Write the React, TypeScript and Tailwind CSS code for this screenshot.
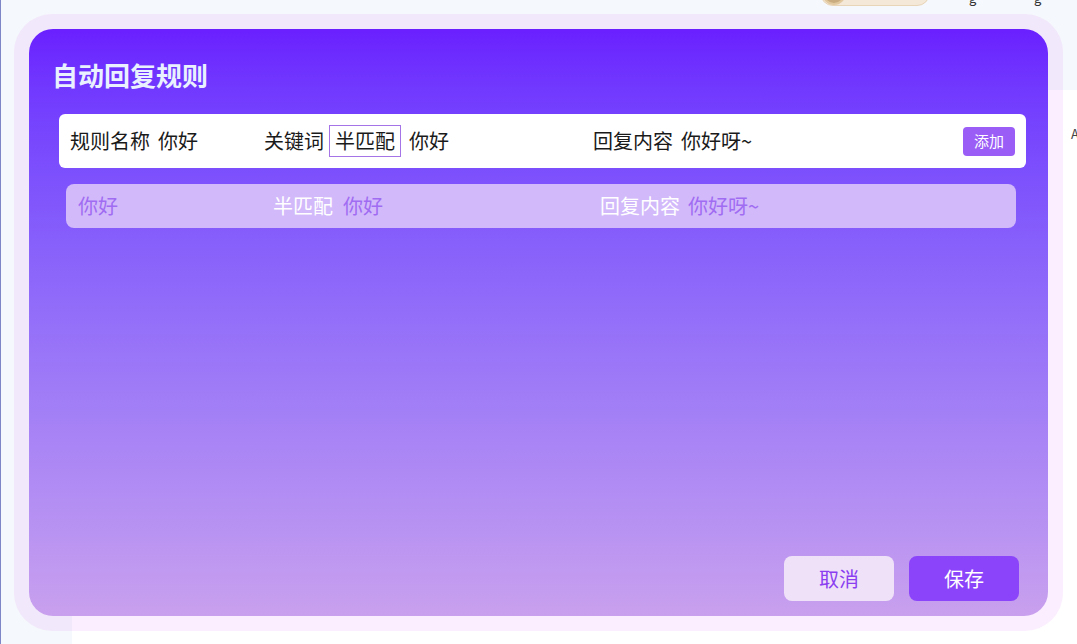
export default function App() {
  return (
    <div className="relative flex h-[644px] w-[1077px] overflow-hidden bg-[#f5f8fc] font-['Noto_Sans_CJK_SC',sans-serif]">
      {/* page behind the dialog */}
      <div className="w-[72px] shrink-0 border-l border-[#7f86c8]" />
      <div className="flex flex-1 flex-col">
        <div className="relative h-[90px]">
          <div className="absolute left-[748px] top-[-20px] flex h-[26px] w-[110px] items-center rounded-full border border-[#e8d4b6] bg-[#f4e8d8] pl-[1px]">
            <div className="h-[24px] w-[24px] rounded-full border-2 border-[#e2c9a0] bg-[#c9ad80]" />
          </div>
          <span className="absolute left-[897px] top-[-12px] text-[13px] text-[#333]">g</span>
          <span className="absolute left-[962px] top-[-12px] text-[13px] text-[#333]">g</span>
        </div>
        <div className="relative flex-1 bg-white">
          <span className="absolute left-[999px] top-[34px] text-[13px] text-[#444]">A</span>
        </div>
      </div>

      {/* dialog */}
      <div className="absolute left-[14px] top-[14px] h-[617px] w-[1049px] rounded-[38px] bg-[rgba(228,142,248,0.15)] p-[15px]">
        <div className="flex h-full flex-col rounded-[24px] bg-gradient-to-b from-[#6a1fff] to-[#c9a0ee]">
          <h1 className="ml-[23px] mt-[29px] text-[26px] font-bold leading-[34px] text-[#e9f1ff]">自动回复规则</h1>

          <div className="ml-[30px] mt-[22px] flex h-[54px] w-[967px] items-center rounded-[6px] bg-white pl-[11px] pr-[11px] text-[20px] text-[#1a1a1a]">
            <div className="w-[194px]">
              <span>规则名称</span>
              <span className="ml-[8px]">你好</span>
            </div>
            <div className="flex w-[329px] items-center">
              <span>关键词</span>
              <span className="ml-[5px] flex h-[32px] w-[72px] items-center justify-center border border-[#a574e6]">半匹配</span>
              <span className="ml-[8px]">你好</span>
            </div>
            <div>
              <span>回复内容</span>
              <span className="ml-[8px]">你好呀~</span>
            </div>
            <button className="ml-auto h-[29px] w-[52px] rounded-[4px] bg-[#9a5df6] text-[15px] text-white">添加</button>
          </div>

          <div className="ml-[37px] mt-[16px] flex h-[44px] w-[950px] items-center rounded-[8px] bg-[#d2b9fa] pl-[12px] text-[20px] text-[#a06cf2]">
            <div className="w-[195px]">你好</div>
            <div className="w-[327px]">
              <span className="text-white">半匹配</span>
              <span className="ml-[10px]">你好</span>
            </div>
            <div>
              <span className="text-white">回复内容</span>
              <span className="ml-[8px]">你好呀~</span>
            </div>
          </div>

          <div className="mb-[15px] mr-[29px] mt-auto flex justify-end gap-[15px]">
            <button className="h-[45px] w-[110px] rounded-[8px] bg-[#efe2f8] text-[20px] text-[#8a3ef0]">取消</button>
            <button className="h-[45px] w-[110px] rounded-[8px] bg-[#8b44fa] text-[20px] text-white">保存</button>
          </div>
        </div>
      </div>
    </div>
  );
}
